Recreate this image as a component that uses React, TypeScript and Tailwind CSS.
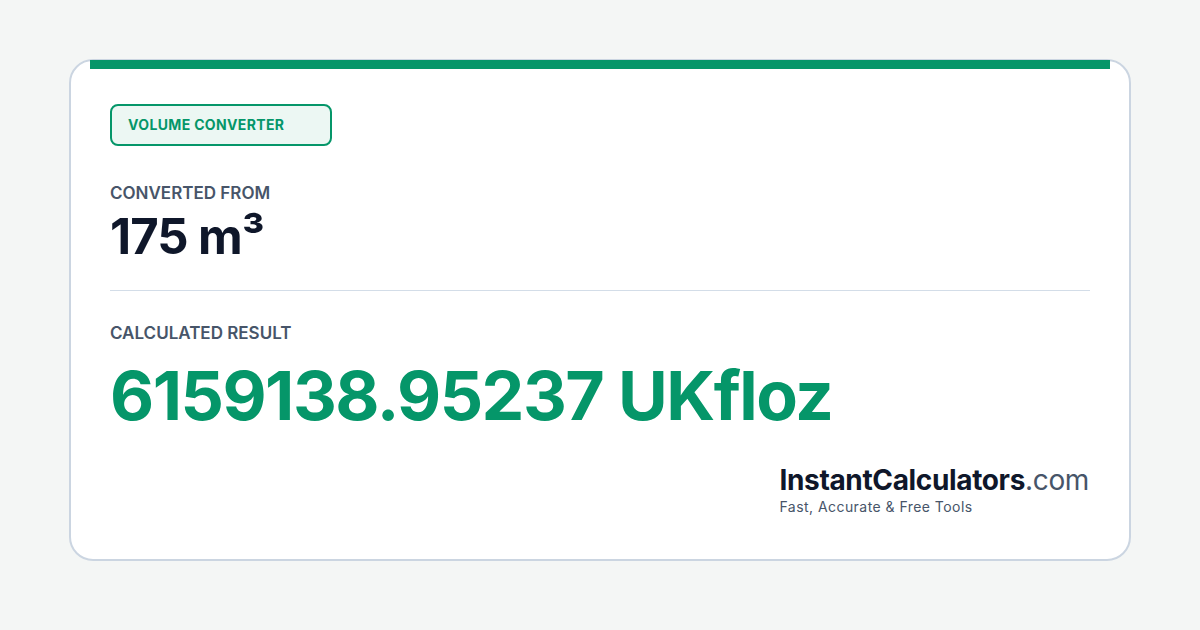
import React from "react";

export default function App() {
  return (
    <div
      className="w-[1200px] h-[630px] bg-[#f4f6f5] pt-[59px] pl-[69px]"
      style={{ fontFamily: "Inter, 'Noto Sans', sans-serif" }}
    >
      <div className="relative w-[1062px] h-[502px] bg-white border-2 border-[#cbd5e1] rounded-[24px] px-[39px] pt-[43px]">
        <div className="absolute top-[-1px] left-[19px] w-[1020px] h-[9px] bg-[#059669]" />
        <div className="w-[222px] h-[42px] border-2 border-[#059669] bg-[#ecf7f3] rounded-[8px] flex items-center pl-[16px]">
          <span className="text-[14px] font-bold text-[#059669] leading-none tracking-[0.35px]">
            VOLUME CONVERTER
          </span>
        </div>
        <div className="mt-[36px] text-[17px] font-semibold text-[#475569] leading-[22px]">
          CONVERTED FROM
        </div>
        <div className="mt-[4px] text-[49px] font-bold text-[#0f172a] leading-[58px] tracking-[-1px]">
          175 m³
        </div>
        <div className="mt-[24px] h-px bg-[#d3dde8]" />
        <div className="mt-[31px] text-[17px] font-semibold text-[#475569] leading-[22px]">
          CALCULATED RESULT
        </div>
        <div className="mt-[11px] text-[68px] font-bold text-[#059669] leading-[80px] tracking-[-1.5px]">
          6159138.95237 UKfloz
        </div>
        <div className="mt-[28px] flex justify-end pr-[1px]">
          <div>
            <div className="text-[28px] leading-[34px] tracking-[-0.35px]">
              <span className="font-bold text-[#0f172a]">InstantCalculators</span>
              <span className="font-normal text-[#475569]">.com</span>
            </div>
            <div className="mt-[1px] text-[14px] leading-[18px] text-[#475569] tracking-[0.45px]">
              Fast, Accurate &amp; Free Tools
            </div>
          </div>
        </div>
      </div>
    </div>
  );
}
